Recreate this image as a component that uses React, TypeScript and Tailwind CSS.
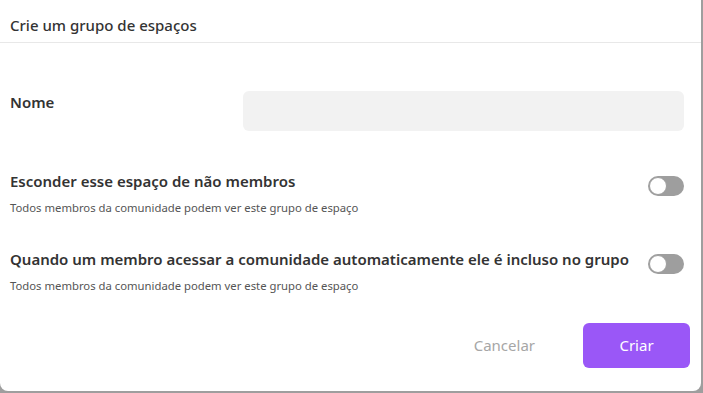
import React, { useState } from "react";

const font = { fontFamily: '"Noto Sans", "Open Sans", sans-serif' };

function Toggle({ on, onChange }: { on: boolean; onChange: () => void }) {
  return (
    <button
      onClick={onChange}
      className={`relative w-[36px] h-[20px] rounded-full shrink-0 ${on ? "bg-[#9a57f7]" : "bg-[#9e9e9e]"}`}
    >
      <span
        className={`absolute top-[1px] w-[18px] h-[18px] rounded-full bg-white border border-[#9e9e9e] ${on ? "left-[17px]" : "left-[1px]"}`}
      />
    </button>
  );
}

function OptionRow({ title, sub, on, onChange }: { title: string; sub: string; on: boolean; onChange: () => void }) {
  return (
    <div className="flex items-start justify-between pr-[17px]">
      <div className="flex flex-col">
        <span className="text-[15px] font-semibold text-[#333] leading-[20px]">{title}</span>
        <span className="text-[11.3px] text-[#555] leading-[14px] mt-[10px]">{sub}</span>
      </div>
      <div className="pt-[5px]">
        <Toggle on={on} onChange={onChange} />
      </div>
    </div>
  );
}

export default function App() {
  const [nome, setNome] = useState("");
  const [esconder, setEsconder] = useState(false);
  const [auto, setAuto] = useState(false);

  return (
    <div className="w-[703px] h-[393px] bg-[#9e9e9e] overflow-hidden" style={font}>
      <div className="w-[701px] h-[391px] bg-white rounded-b-lg flex flex-col">
        <div className="h-[43px] px-[10px] pt-[14px] border-b border-[#e8e8e8]">
          <h1 className="text-[15px] font-medium text-[#333] leading-[22px]">Crie um grupo de espaços</h1>
        </div>

        <div className="pl-[10px] pt-[48px] flex items-start justify-between pr-[17px]">
          <label className="text-[15px] font-semibold text-[#333] leading-[20px] pt-[1px]">Nome</label>
          <input
            value={nome}
            onChange={e => setNome(e.target.value)}
            className="w-[441px] h-[40px] rounded-md bg-[#f2f2f2] px-3 text-[14px] focus:outline-none"
          />
        </div>

        <div className="pl-[10px] mt-[40px] flex flex-col gap-[34px]">
          <OptionRow
            title="Esconder esse espaço de não membros"
            sub="Todos membros da comunidade podem ver este grupo de espaço"
            on={esconder}
            onChange={() => setEsconder(v => !v)}
          />
          <OptionRow
            title="Quando um membro acessar a comunidade automaticamente ele é incluso no grupo"
            sub="Todos membros da comunidade podem ver este grupo de espaço"
            on={auto}
            onChange={() => setAuto(v => !v)}
          />
        </div>

        <div className="mt-auto mb-[23px] pr-[11px] flex items-center justify-end gap-[48px]">
          <button className="text-[15px] text-[#a6a6a6]">Cancelar</button>
          <button className="w-[107px] h-[45px] rounded-md bg-[#9a57f7] text-white text-[15px]">Criar</button>
        </div>
      </div>
    </div>
  );
}
